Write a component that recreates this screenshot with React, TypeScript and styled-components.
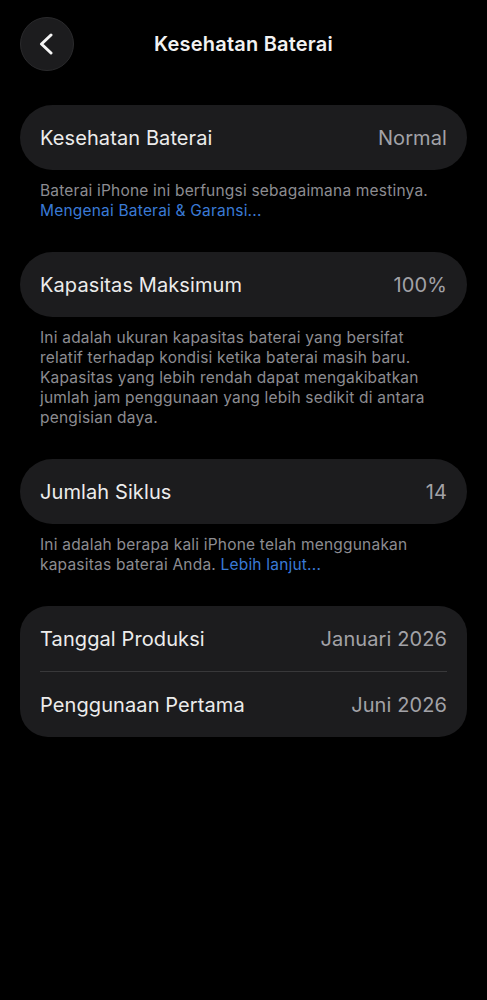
import React from 'react'
import styled, { createGlobalStyle } from 'styled-components'

const GlobalStyle = createGlobalStyle`
  html, body {
    margin: 0;
    padding: 0;
    background: #000;
  }
  body {
    font-family: Inter, "Noto Sans", "Liberation Sans", sans-serif;
    -webkit-font-smoothing: antialiased;
  }
`

const Page = styled.div`
  min-height: 1000px;
  background: #000;
  padding: 17px 20px 0;
  box-sizing: border-box;
`

const Header = styled.header`
  display: grid;
  grid-template-columns: 54px 1fr 54px;
  align-items: center;
  height: 54px;
  margin-bottom: 34px;
`

const BackButton = styled.button`
  width: 54px;
  height: 54px;
  border-radius: 50%;
  background: #1c1c1e;
  border: 1px solid #2a2a2c;
  display: flex;
  align-items: center;
  justify-content: center;
  padding: 0 3px 0 0;
  box-sizing: border-box;
  cursor: pointer;
`

const Title = styled.h1`
  margin: 0;
  text-align: center;
  color: #f2f2f2;
  font-size: 20px;
  font-weight: 600;
  letter-spacing: 0.2px;
`

const Section = styled.section`
  margin-bottom: 31px;
`

const Card = styled.div<{ $pill?: boolean }>`
  background: #1c1c1e;
  border-radius: ${(p) => (p.$pill ? '33px' : '28px')};
  padding: 0 20px;
`

const Row = styled.div<{ $divider?: boolean }>`
  display: flex;
  align-items: center;
  justify-content: space-between;
  height: 65px;
  border-bottom: ${(p) => (p.$divider ? '1px solid #38383a' : 'none')};
`

const Label = styled.span`
  color: #ececec;
  font-size: 20px;
  letter-spacing: 0.1px;
`

const Value = styled.span`
  color: #a2a2a7;
  font-size: 20px;
  letter-spacing: 0.1px;
`

const Footer = styled.p`
  margin: 11px 0 0;
  padding: 0 20px;
  color: #8c8c91;
  font-size: 15.5px;
  line-height: 20px;
  letter-spacing: 0.2px;
`

const Link = styled.a`
  color: #3a7ad6;
  text-decoration: none;
`

const ChevronLeft = () => (
  <svg width="16" height="22" viewBox="0 0 16 22" fill="none">
    <path d="M13 2 L3.5 11 L13 20" stroke="#f5f5f5" strokeWidth="3" strokeLinecap="round" strokeLinejoin="round" />
  </svg>
)

export default function App() {
  return (
    <Page>
      <GlobalStyle />
      <Header>
        <BackButton aria-label="Kembali">
          <ChevronLeft />
        </BackButton>
        <Title>Kesehatan Baterai</Title>
        <span />
      </Header>

      <Section>
        <Card $pill>
          <Row>
            <Label>Kesehatan Baterai</Label>
            <Value>Normal</Value>
          </Row>
        </Card>
        <Footer>
          Baterai iPhone ini berfungsi sebagaimana mestinya.
          <br />
          <Link>Mengenai Baterai &amp; Garansi...</Link>
        </Footer>
      </Section>

      <Section>
        <Card $pill>
          <Row>
            <Label>Kapasitas Maksimum</Label>
            <Value>100%</Value>
          </Row>
        </Card>
        <Footer>
          Ini adalah ukuran kapasitas baterai yang bersifat
          <br />
          relatif terhadap kondisi ketika baterai masih baru.
          <br />
          Kapasitas yang lebih rendah dapat mengakibatkan
          <br />
          jumlah jam penggunaan yang lebih sedikit di antara
          <br />
          pengisian daya.
        </Footer>
      </Section>

      <Section>
        <Card $pill>
          <Row>
            <Label>Jumlah Siklus</Label>
            <Value>14</Value>
          </Row>
        </Card>
        <Footer>
          Ini adalah berapa kali iPhone telah menggunakan
          <br />
          kapasitas baterai Anda. <Link>Lebih lanjut...</Link>
        </Footer>
      </Section>

      <Section>
        <Card>
          <Row $divider>
            <Label>Tanggal Produksi</Label>
            <Value>Januari 2026</Value>
          </Row>
          <Row>
            <Label>Penggunaan Pertama</Label>
            <Value>Juni 2026</Value>
          </Row>
        </Card>
      </Section>
    </Page>
  )
}
